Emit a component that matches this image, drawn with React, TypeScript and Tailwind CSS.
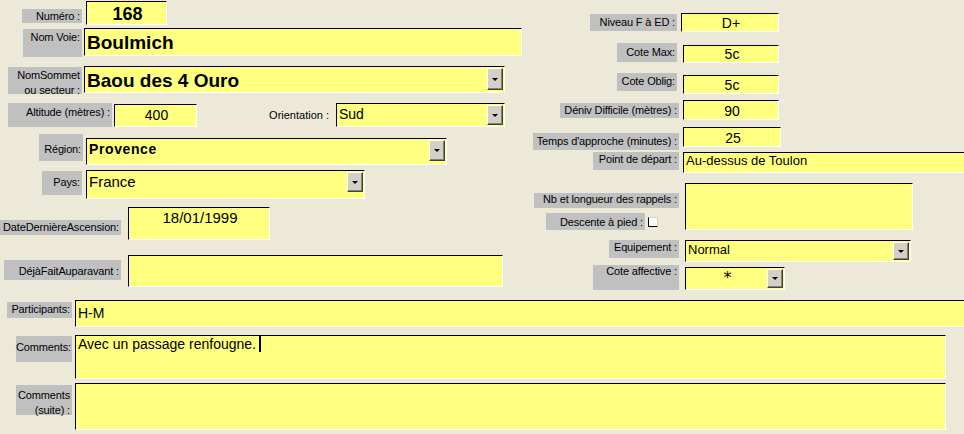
import type { ReactNode } from "react";

function Label({ className, children }: { className: string; children: ReactNode }) {
  return (
    <div
      className={
        "shrink-0 whitespace-nowrap bg-[#c0c0c0] pr-[2px] text-right text-[11px] tracking-[-0.15px] text-black " +
        className
      }
    >
      {children}
    </div>
  );
}

function Field({ className, children }: { className: string; children?: ReactNode }) {
  return (
    <div
      className={
        "shrink-0 overflow-hidden whitespace-nowrap border border-t-black border-l-black border-r-white border-b-white bg-[#ffff80] pl-[2px] text-black " +
        className
      }
    >
      {children}
    </div>
  );
}

function DropBtn({ className }: { className: string }) {
  return (
    <div
      className={
        "ml-auto flex w-[16px] shrink-0 items-center justify-center border border-t-white border-l-white border-r-[#404040] border-b-[#404040] bg-[#d4d0c8] shadow-[inset_-1px_-1px_0_#808080] " +
        className
      }
    >
      <div className="h-0 w-0 border-x-[3px] border-t-[3px] border-x-transparent border-t-black" />
    </div>
  );
}

export default function App() {
  return (
    <div className="h-[434px] w-[964px] overflow-hidden bg-[#ece9d8] font-['Liberation_Sans',Arial,sans-serif]">
      <div className="flex h-[290px]">
        {/* colonne gauche */}
        <div className="w-[525px] shrink-0">
          <div className="flex pt-[1px]">
            <Label className="ml-[22px] mt-[8px] h-[14px] w-[60px] pt-[1px] leading-[13px]">Numéro :</Label>
            <Field className="ml-[4px] h-[24px] w-[81px] pt-[3px] text-center text-[18px] font-bold leading-[18px]">
              168
            </Field>
          </div>

          <div className="mt-[3px] flex">
            <Label className="ml-[23px] mt-[1px] h-[28px] w-[59px] pt-[2px] leading-[13px]">Nom Voie:</Label>
            <Field className="ml-[2px] h-[28px] w-[438px] pt-[4px] text-[19px] font-bold leading-[19px]">
              Boulmich
            </Field>
          </div>

          <div className="mt-[9px] flex">
            <Label className="ml-[8px] mt-[1px] h-[27px] w-[74px] pt-[1px] leading-[15px]">
              NomSommet
              <br />
              ou secteur :
            </Label>
            <Field className="ml-[2px] flex h-[27px] w-[421px] items-start">
              <span className="pt-[4px] text-[19px] font-bold leading-[19px]">Baou des 4 Ouro</span>
              <DropBtn className="mr-[1px] mt-[1px] h-[22px]" />
            </Field>
          </div>

          <div className="mt-[9px] flex">
            <Label className="ml-[8px] h-[24px] w-[104px] pt-[3px] leading-[13px]">Altitude (mètres) :</Label>
            <Field className="ml-[2px] mt-[1px] h-[23px] w-[83px] pt-[2px] text-center text-[14px] leading-[16px]">
              400
            </Field>
            <div className="ml-[67px] w-[65px] shrink-0 whitespace-nowrap pt-[6px] text-right text-[11px] leading-[13px] text-black">
              Orientation :
            </div>
            <Field className="ml-[7px] flex h-[24px] w-[169px] items-start">
              <span className="pt-[2px] text-[14px] leading-[16px]">Sud</span>
              <DropBtn className="mr-[1px] mt-[1px] h-[20px]" />
            </Field>
          </div>

          <div className="mt-[7px] flex">
            <Label className="ml-[39px] h-[27px] w-[44px] pt-[9px] leading-[13px]">Région:</Label>
            <Field className="ml-[3px] mt-[4px] flex h-[27px] w-[361px] items-start">
              <span className="pt-[2px] text-[14px] font-bold leading-[16px] tracking-[0.6px]">Provence</span>
              <DropBtn className="mr-[1px] mt-[1px] h-[21px]" />
            </Field>
          </div>

          <div className="mt-[5px] flex">
            <Label className="ml-[42px] mt-[1px] h-[24px] w-[40px] pt-[5px] leading-[13px]">Pays:</Label>
            <Field className="ml-[4px] flex h-[29px] w-[279px] items-start">
              <span className="pt-[3px] text-[15px] leading-[16px]">France</span>
              <DropBtn className="mr-[1px] mt-[1px] h-[20px]" />
            </Field>
          </div>

          <div className="mt-[8px] flex">
            <Label className="mt-[13px] h-[15px] w-[121px] pt-[1px] leading-[13px]">DateDernièreAscension:</Label>
            <Field className="ml-[7px] h-[33px] w-[142px] pt-[2px] text-center text-[15px] leading-[16px]">
              18/01/1999
            </Field>
          </div>

          <div className="mt-[15px] flex">
            <Label className="ml-[4px] mt-[5px] h-[20px] w-[117px] pt-[5px] leading-[13px]">DéjàFaitAuparavant :</Label>
            <Field className="ml-[7px] h-[32px] w-[375px]" />
          </div>
        </div>

        {/* colonne droite */}
        <div className="flex-1">
          <div className="mt-[13px] flex">
            <Label className="ml-[65px] mt-[1px] h-[17px] w-[87px] pt-[2px] leading-[13px]">Niveau F à ED :</Label>
            <Field className="ml-[4px] h-[19px] w-[98px] pt-[1px] text-center text-[14px] leading-[16px]">D+</Field>
          </div>

          <div className="mt-[11px] flex">
            <Label className="ml-[92px] h-[19px] w-[60px] pt-[3px] leading-[13px]">Cote Max:</Label>
            <Field className="ml-[6px] mt-[2px] h-[18px] w-[96px] text-center text-[14px] leading-[16px]">5c</Field>
          </div>

          <div className="mt-[10px] flex">
            <Label className="ml-[92px] h-[18px] w-[60px] pt-[2px] leading-[13px]">Cote Oblig:</Label>
            <Field className="ml-[6px] mt-[2px] h-[19px] w-[96px] pt-[1px] text-center text-[14px] leading-[16px]">
              5c
            </Field>
          </div>

          <div className="mt-[6px] flex">
            <Label className="ml-[35px] mt-[3px] h-[15px] w-[119px] pt-[1px] leading-[13px]">
              Déniv Difficile (mètres) :
            </Label>
            <Field className="ml-[4px] h-[20px] w-[96px] pt-[2px] text-center text-[14px] leading-[16px]">90</Field>
          </div>

          <div className="mt-[7px] flex">
            <Label className="ml-[8px] mt-[6px] h-[17px] w-[146px] pt-[2px] leading-[13px]">
              Temps d'approche (minutes) :
            </Label>
            <Field className="ml-[4px] h-[20px] w-[98px] pt-[3px] text-center text-[14px] leading-[14px]">25</Field>
          </div>

          <div className="mt-[2px] flex">
            <Label className="ml-[68px] h-[18px] w-[86px] pt-[1px] leading-[13px]">Point de départ :</Label>
            <Field className="ml-[4px] h-[21px] w-[300px] text-[13px] leading-[16px]">Au-dessus de Toulon</Field>
          </div>

          <div className="mt-[10px] flex">
            <div className="flex w-[154px] shrink-0 flex-col">
              <Label className="ml-[9px] mt-[10px] h-[15px] w-[145px] leading-[13px]">
                Nb et longueur des rappels :
              </Label>
              <div className="mt-[5px] flex">
                <Label className="ml-[21px] h-[17px] w-[99px] pt-[3px] leading-[13px]">Descente à pied :</Label>
                <div className="ml-[3px] mt-[4px] h-[10px] w-[10px] shrink-0 border border-b-black border-l-black border-r-[#d4d0c8] border-t-[#d4d0c8] bg-white" />
              </div>
            </div>
            <Field className="ml-[6px] h-[47px] w-[228px]" />
          </div>

          <div className="mt-[10px] flex">
            <Label className="ml-[84px] h-[18px] w-[70px] pt-[1px] leading-[13px]">Equipement :</Label>
            <Field className="ml-[6px] flex h-[22px] w-[226px] items-start">
              <span className="pt-[1px] text-[13px] leading-[16px]">Normal</span>
              <DropBtn className="mr-[1px] mt-[1px] h-[18px]" />
            </Field>
          </div>

          <div className="mt-[3px] flex">
            <Label className="ml-[68px] h-[25px] w-[86px] leading-[13px]">Cote affective :</Label>
            <Field className="ml-[6px] mt-[2px] flex h-[23px] w-[100px] items-start">
              <span className="flex-1 pt-[2px] text-center font-['DejaVu_Sans',sans-serif] text-[16px] leading-[16px]">
                *
              </span>
              <DropBtn className="mr-[1px] mt-[1px] h-[19px]" />
            </Field>
          </div>
        </div>
      </div>

      {/* bas de formulaire */}
      <div className="mt-[10px] flex">
        <Label className="ml-[7px] mt-[2px] h-[16px] w-[65px] pt-[1px] leading-[13px]">Participants:</Label>
        <Field className="ml-[3px] h-[27px] w-[900px] pt-[4px] text-[14px] leading-[16px]">H-M</Field>
      </div>

      <div className="mt-[8px] flex">
        <Label className="ml-[16px] mt-[1px] h-[26px] w-[56px] pt-[5px] leading-[13px]">Comments:</Label>
        <Field className="ml-[3px] h-[44px] w-[871px] text-[14px] leading-[16px]">
          Avec un passage renfougne.
          <span className="ml-[3px] inline-block h-[16px] w-[2px] bg-black align-top" />
        </Field>
      </div>

      <div className="mt-[4px] flex">
        <Label className="ml-[16px] mt-[2px] h-[30px] w-[56px] pt-[3px] leading-[15px]">
          Comments
          <br />
          (suite) :
        </Label>
        <Field className="ml-[3px] h-[47px] w-[871px]" />
      </div>
    </div>
  );
}
